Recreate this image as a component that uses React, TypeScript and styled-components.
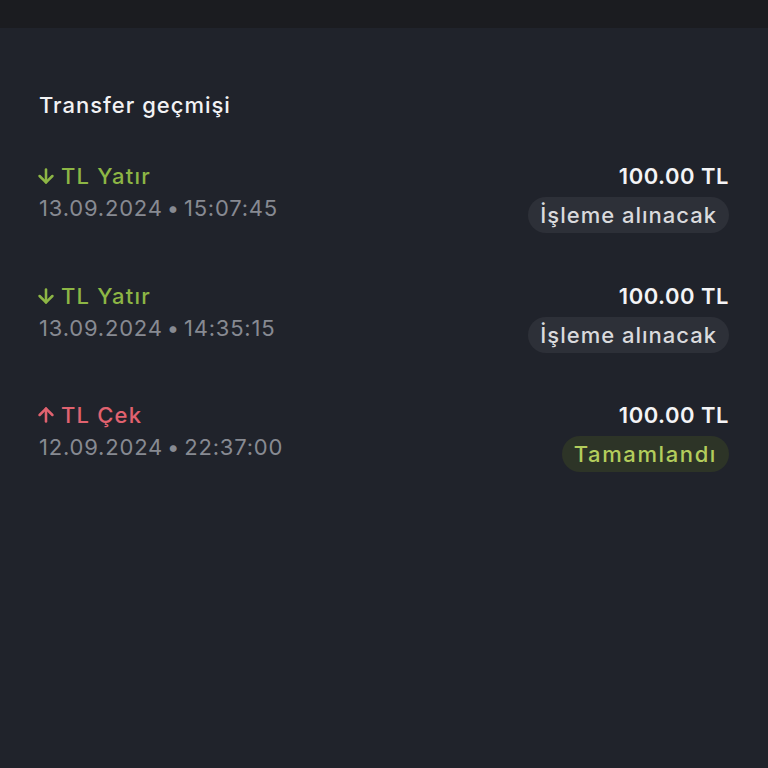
import React from 'react';
import styled, { createGlobalStyle } from 'styled-components';
import { ArrowDown, ArrowUp } from 'lucide-react';

type Kind = 'in' | 'out';
type Status = 'pending' | 'done';

interface Transfer {
  id: number;
  kind: Kind;
  label: string;
  date: string;
  time: string;
  amount: string;
  status: Status;
}

const transfers: Transfer[] = [
  { id: 1, kind: 'in', label: 'TL Yatır', date: '13.09.2024', time: '15:07:45', amount: '100.00 TL', status: 'pending' },
  { id: 2, kind: 'in', label: 'TL Yatır', date: '13.09.2024', time: '14:35:15', amount: '100.00 TL', status: 'pending' },
  { id: 3, kind: 'out', label: 'TL Çek', date: '12.09.2024', time: '22:37:00', amount: '100.00 TL', status: 'done' },
];

const statusText: Record<Status, string> = {
  pending: 'İşleme alınacak',
  done: 'Tamamlandı',
};

const GlobalStyle = createGlobalStyle`
  html, body {
    margin: 0;
    padding: 0;
    background: #20232b;
    font-family: Inter, "Open Sans", sans-serif;
  }
`;

const Screen = styled.div`
  min-height: 768px;
  display: flex;
  flex-direction: column;
  background: #20232b;
`;

const TopBar = styled.div`
  height: 28px;
  background: #1b1c20;
`;

const Content = styled.div`
  padding: 63px 39px 0 39px;
`;

const Title = styled.h2`
  margin: 0 0 43px;
  font-size: 22px;
  font-weight: 500;
  letter-spacing: 1px;
  color: #f2f2f4;
  line-height: 28px;
`;

const List = styled.div`
  display: flex;
  flex-direction: column;
  gap: 48.5px;
`;

const Row = styled.div`
  display: flex;
  justify-content: space-between;
  align-items: flex-start;
`;

const Side = styled.div<{ $right?: boolean }>`
  display: flex;
  flex-direction: column;
  align-items: ${(p) => (p.$right ? 'flex-end' : 'flex-start')};
`;

const Label = styled.div<{ $kind: Kind }>`
  display: flex;
  align-items: center;
  gap: 4px;
  margin-left: -4px;
  font-size: 22px;
  font-weight: 500;
  letter-spacing: 1.2px;
  line-height: 28px;
  color: ${(p) => (p.$kind === 'in' ? '#8db645' : '#e0626f')};
`;

const DateLine = styled.div`
  margin-top: 4px;
  font-size: 22px;
  font-weight: 400;
  line-height: 28px;
  letter-spacing: 0.8px;
  color: #878a92;
`;

const Dot = styled.span`
  margin: 0 4px;
`;

const Amount = styled.div`
  font-size: 22px;
  font-weight: 600;
  letter-spacing: 0.5px;
  line-height: 28px;
  color: #f4f4f6;
`;

const Badge = styled.div<{ $status: Status }>`
  margin-top: 7px;
  height: 36px;
  padding: 0 12px;
  border-radius: 18px;
  display: flex;
  align-items: center;
  font-size: 22px;
  font-weight: 500;
  letter-spacing: ${(p) => (p.$status === 'done' ? '1.6px' : '1px')};
  background: ${(p) => (p.$status === 'done' ? '#2d3427' : '#2d3038')};
  color: ${(p) => (p.$status === 'done' ? '#b3cd5c' : '#d9dadd')};
`;

export default function App() {
  return (
    <>
      <GlobalStyle />
      <Screen>
        <TopBar />
        <Content>
          <Title>Transfer geçmişi</Title>
          <List>
            {transfers.map((t) => (
              <Row key={t.id}>
                <Side>
                  <Label $kind={t.kind}>
                    {t.kind === 'in' ? (
                      <ArrowDown size={22} strokeWidth={2.8} />
                    ) : (
                      <ArrowUp size={22} strokeWidth={2.8} />
                    )}
                    {t.label}
                  </Label>
                  <DateLine>
                    {t.date}
                    <Dot>•</Dot>
                    {t.time}
                  </DateLine>
                </Side>
                <Side $right>
                  <Amount>{t.amount}</Amount>
                  <Badge $status={t.status}>{statusText[t.status]}</Badge>
                </Side>
              </Row>
            ))}
          </List>
        </Content>
      </Screen>
    </>
  );
}
